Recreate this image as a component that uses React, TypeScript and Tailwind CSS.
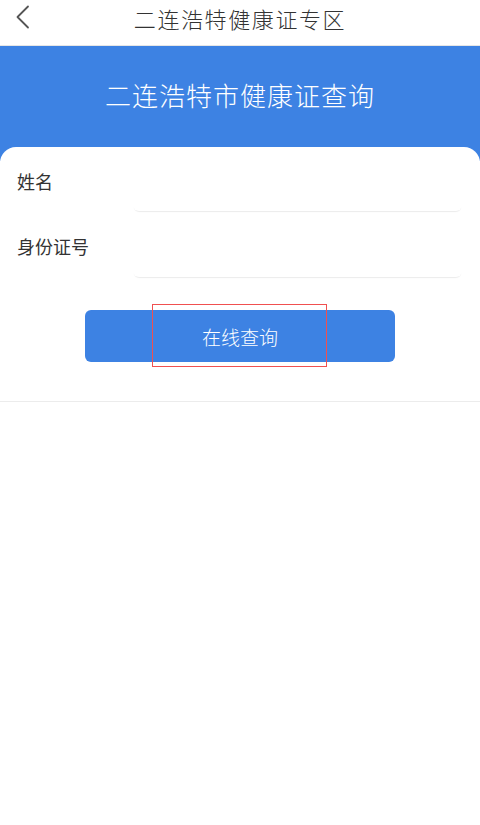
import React from "react";

export default function App() {
  const font = { fontFamily: '"Noto Sans CJK SC", "Noto Sans", sans-serif' };
  return (
    <div className="w-[480px] h-[825px] bg-white flex flex-col" style={font}>
      <div className="h-[46px] shrink-0 relative flex items-center justify-center border-b border-[#e6e6e6] bg-white">
        <svg className="absolute left-[14px] top-[5px]" width="18" height="24" viewBox="0 0 18 24" fill="none">
          <path d="M14 1.5 L3.5 12 L14 22.5" stroke="#555" strokeWidth="1.8" strokeLinecap="round" strokeLinejoin="round" />
        </svg>
        <span className="text-[22px] text-[#333] leading-none -mt-[10px] tracking-[1.6px] font-light">二连浩特健康证专区</span>
      </div>
      <div className="bg-[#3d82e3] h-[115px] shrink-0 flex justify-center pt-[36px]">
        <span className="text-white text-[26px] leading-none tracking-[1px] font-light">二连浩特市健康证查询</span>
      </div>
      <div className="-mt-[14px] bg-white rounded-t-[16px] border-b border-[#ececec] pb-[39px]">
        <div className="flex items-start pt-[20px] pl-[17px] pr-[18px]">
          <span className="w-[116px] text-[18px] text-[#333] leading-[28px]">姓名</span>
          <div className="flex-1 h-[44px] rounded-[6px] shadow-[0_2px_1px_-1px_rgba(0,0,0,0.08)] bg-white" />
        </div>
        <div className="flex items-start pt-[21px] pl-[17px] pr-[18px]">
          <span className="w-[116px] text-[18px] text-[#333] leading-[28px]">身份证号</span>
          <div className="flex-1 h-[45px] rounded-[6px] shadow-[0_2px_1px_-1px_rgba(0,0,0,0.08)] bg-white" />
        </div>
        <div className="flex justify-center mt-[33px]">
          <div className="relative w-[310px] h-[52px] rounded-[6px] bg-[#3d82e3] flex items-center justify-center">
            <span className="text-white text-[19px] leading-none font-light">在线查询</span>
            <div className="absolute left-[67px] top-[-6px] w-[175px] h-[63px] border-[1.5px] border-[#f05050]" />
          </div>
        </div>
      </div>
    </div>
  );
}
